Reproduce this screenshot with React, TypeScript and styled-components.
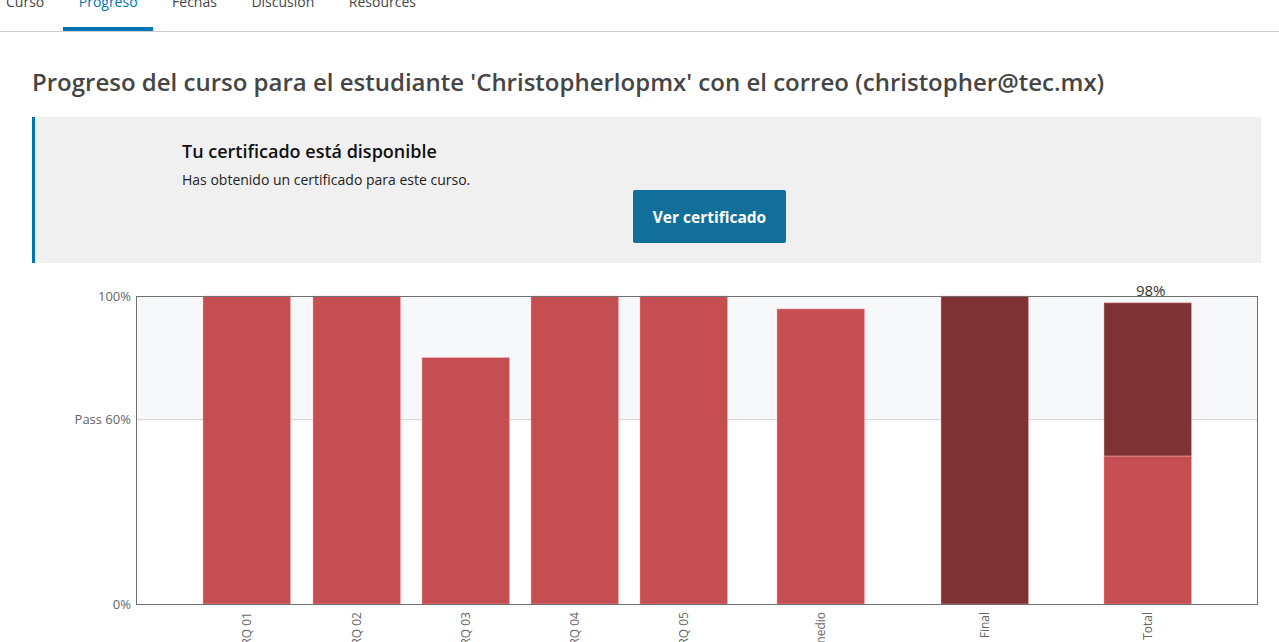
import React from "react";
import styled, { createGlobalStyle } from "styled-components";

const Global = createGlobalStyle`
  html, body { margin: 0; padding: 0; background: #fff; overflow: hidden; }
  body { font-family: "Open Sans", "Noto Sans", sans-serif; color: #454545; }
  * { box-sizing: border-box; }
`;

const Page = styled.div`
  width: 1279px;
  height: 642px;
  overflow: hidden;
`;

const Nav = styled.nav`
  display: flex;
  gap: 3px;
  margin-top: -8px;
  margin-left: -10px;
  border-bottom: 1px solid #cfcfcf;
`;

const Tab = styled.a<{ $active?: boolean }>`
  display: block;
  padding: 0 15.5px 15px 16px;
  font-size: 14px;
  line-height: 20px;
  color: ${(p) => (p.$active ? "#0075b4" : "#454545")};
  border-bottom: 4px solid ${(p) => (p.$active ? "#0075b4" : "transparent")};
  text-decoration: none;
`;

const Main = styled.main`
  padding: 0 18px 0 32px;
`;

const Title = styled.h1`
  margin: 34px 0 19px 0;
  font-size: 24px;
  line-height: 32px;
  font-weight: 600;
  color: #454545;
`;

const CertBox = styled.section`
  background: #f0f0f0;
  border-left: 3px solid #0075b4;
  padding: 22px 0 20px 147px;
`;

const CertHeading = styled.h2`
  margin: 0;
  font-size: 18px;
  line-height: 24px;
  font-weight: 600;
  color: #111;
`;

const CertText = styled.p`
  margin: 7px 0 0;
  font-size: 14px;
  line-height: 20px;
  color: #222;
`;

const CertButton = styled.button`
  display: block;
  margin: 0 0 0 451px;
  width: 153px;
  height: 53px;
  border: none;
  border-radius: 2px;
  background: #126f9a;
  color: #fff;
  font-family: "Open Sans", sans-serif;
  font-size: 15.5px;
  font-weight: 700;
  cursor: pointer;
`;

const ChartWrap = styled.div`
  height: 379px;
`;

const PLOT_L = 104;
const PLOT_R = 1225;
const PLOT_T = 33;
const PLOT_B = 341;
const H = PLOT_B - PLOT_T;
const yOf = (v: number) => PLOT_B - v * H;

type Bar = { label: string; x: number; v: number; dark?: boolean; split?: number; tag?: string };

const bars: Bar[] = [
  { label: "RQ 01", x: 171, v: 1 },
  { label: "RQ 02", x: 281, v: 1 },
  { label: "RQ 03", x: 390, v: 0.8 },
  { label: "RQ 04", x: 499, v: 1 },
  { label: "RQ 05", x: 608, v: 1 },
  { label: "Promedio", x: 745, v: 0.958 },
  { label: "Final", x: 909, v: 1, dark: true },
  { label: "Total", x: 1072, v: 0.978, dark: true, split: 0.48, tag: "98%" },
];

const BW = 87.5;
const RED = "#c44e51";
const DARK = "#7f3234";
const EDGE = "rgba(255,170,170,0.45)";

function Chart() {
  return (
    <svg width={1229} height={379} viewBox="0 0 1229 379">
      <rect x={PLOT_L} y={PLOT_T} width={PLOT_R - PLOT_L} height={yOf(0.6) - PLOT_T} fill="#f7f8fa" />
      <line x1={PLOT_L} x2={PLOT_R} y1={yOf(0.6) + 0.5} y2={yOf(0.6) + 0.5} stroke="#cfcfcf" strokeWidth={1} />
      {bars.map((b) => {
        const top = yOf(b.v);
        const cx = b.x + BW / 2;
        return (
          <g key={b.label}>
            {b.split !== undefined ? (
              <>
                <rect x={b.x} y={top} width={BW} height={yOf(b.split) - top} fill={DARK} stroke={EDGE} strokeWidth={1} />
                <rect x={b.x} y={yOf(b.split)} width={BW} height={PLOT_B - yOf(b.split)} fill={RED} stroke={EDGE} strokeWidth={1} />
              </>
            ) : (
              <rect x={b.x} y={top} width={BW} height={PLOT_B - top} fill={b.dark ? DARK : RED} stroke={EDGE} strokeWidth={1} />
            )}
            {b.tag && (
              <text x={cx + 3} y={PLOT_T} textAnchor="middle" fontSize={15} fill="#333" fontFamily="Open Sans, sans-serif">
                {b.tag}
              </text>
            )}
            <text
              transform={`translate(${cx + 4}, ${PLOT_B + 8}) rotate(-90)`}
              textAnchor="end"
              fontSize={12}
              fill="#666"
              fontFamily="Open Sans, sans-serif"
            >
              {b.label}
            </text>
          </g>
        );
      })}
      <rect x={PLOT_L + 0.5} y={PLOT_T + 0.5} width={PLOT_R - PLOT_L} height={H} fill="none" stroke="#707070" strokeWidth={1} />
      {[
        { t: "100%", v: 1 },
        { t: "Pass 60%", v: 0.6 },
        { t: "0%", v: 0 },
      ].map((l) => (
        <text key={l.t} x={PLOT_L - 5} y={yOf(l.v) + 5} textAnchor="end" fontSize={13} fill="#666" fontFamily="Open Sans, sans-serif">
          {l.t}
        </text>
      ))}
    </svg>
  );
}

export default function App() {
  return (
    <Page>
      <Global />
      <Nav>
        <Tab href="#">Curso</Tab>
        <Tab href="#" $active>Progreso</Tab>
        <Tab href="#">Fechas</Tab>
        <Tab href="#">Discusión</Tab>
        <Tab href="#">Resources</Tab>
      </Nav>
      <Main>
        <Title>Progreso del curso para el estudiante 'Christopherlopmx' con el correo (christopher@tec.mx)</Title>
        <CertBox>
          <CertHeading>Tu certificado está disponible</CertHeading>
          <CertText>Has obtenido un certificado para este curso.</CertText>
          <CertButton>Ver certificado</CertButton>
        </CertBox>
        <ChartWrap>
          <Chart />
        </ChartWrap>
      </Main>
    </Page>
  );
}
